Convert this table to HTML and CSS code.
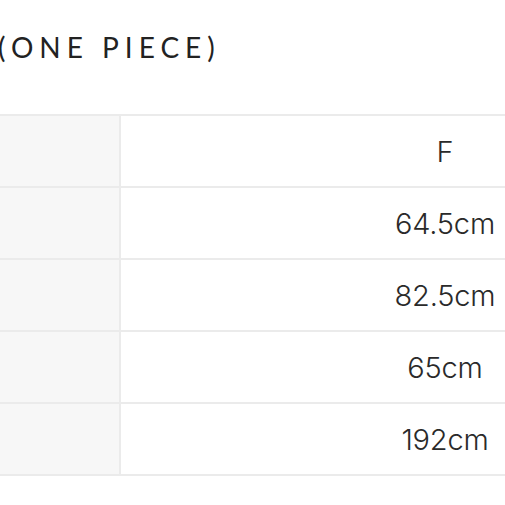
FILE: index.html
```html
<!DOCTYPE html>
<html>
<head>
<meta charset="utf-8">
<link rel="stylesheet" href="styles.css">
</head>
<body>
<div class="page">
  <h1 class="title">(ONE PIECE)</h1>
  <table class="size-table">
    <tr><td class="label"></td><td class="value">F</td></tr>
    <tr><td class="label"></td><td class="value">64.5cm</td></tr>
    <tr><td class="label"></td><td class="value">82.5cm</td></tr>
    <tr><td class="label"></td><td class="value">65cm</td></tr>
    <tr><td class="label"></td><td class="value">192cm</td></tr>
  </table>
</div>
</body>
</html>
```
FILE: styles.css
```css
html, body {
  margin: 0;
  padding: 0;
  background: #fff;
  overflow: hidden;
}
.page {
  width: 505px;
  height: 505px;
  overflow: hidden;
  font-family: "Lato", "Inter", sans-serif;
}
.title {
  margin: 0;
  height: 114px;
  padding-top: 29px;
  box-sizing: border-box;
  margin-left: -2px;
  font-size: 28px;
  font-weight: 400;
  letter-spacing: 6px;
  line-height: 36px;
  color: #222;
  white-space: nowrap;
}
.size-table {
  border-collapse: collapse;
  width: 770px;
  table-layout: fixed;
}
.size-table td {
  height: 70px;
  padding: 0;
  border: 2px solid #ebebeb;
}
.label {
  width: 119px;
  background: #f7f7f7;
  border-left: none !important;
}
.value {
  width: 648px;
  background: #fff;
  text-align: center;
  font-family: "Inter", "Lato", sans-serif;
  font-size: 29px;
  font-weight: 300;
  color: #2a2a2a;
  letter-spacing: -0.2px;
}
```
